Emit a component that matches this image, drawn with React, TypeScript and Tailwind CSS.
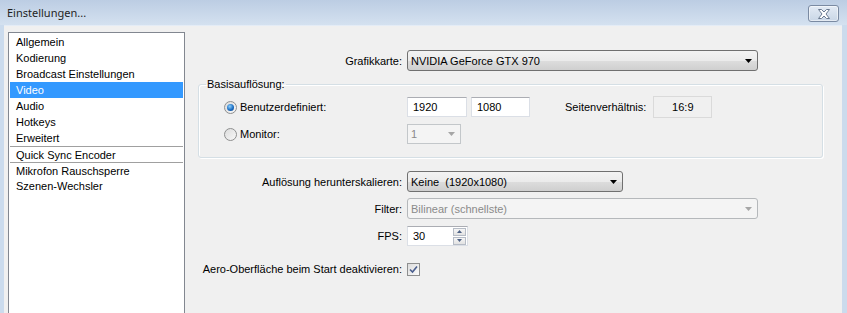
import React from "react";

const NAV_ITEMS = [
  { label: "Allgemein" },
  { label: "Kodierung" },
  { label: "Broadcast Einstellungen" },
  { label: "Video", active: true },
  { label: "Audio" },
  { label: "Hotkeys" },
  { label: "Erweitert" },
  { label: "Quick Sync Encoder", divider: true },
  { label: "Mikrofon Rauschsperre", divider: true },
  { label: "Szenen-Wechsler" },
];

function Arrow({ disabled = false }: { disabled?: boolean }) {
  return (
    <svg width="7" height="4" viewBox="0 0 7 4" className="shrink-0">
      <path d="M0 0h7L3.5 4z" fill={disabled ? "#a6a6a6" : "#000"} />
    </svg>
  );
}

function Combo({
  value,
  width,
  disabled = false,
}: {
  value: string;
  width: string;
  disabled?: boolean;
}) {
  return (
    <div
      className={`${width} h-[21px] flex items-center justify-between pl-[3px] pr-[5px] rounded-[3px] border ${
        disabled
          ? "border-[#b5b8bb] bg-[#f4f4f4] text-[#8a8a8a]"
          : "border-[#707070] bg-[linear-gradient(#f3f3f3_0%,#ebebeb_50%,#dddddd_51%,#cfcfcf_100%)] text-black"
      }`}
    >
      <span className="whitespace-pre">{value}</span>
      <Arrow disabled={disabled} />
    </div>
  );
}

function TextBox({ value, width }: { value: string; width: string }) {
  return (
    <div
      className={`${width} h-[20px] flex items-center px-[5px] bg-white border border-[#dbdfe6] border-t-[#abadb3]`}
    >
      {value}
    </div>
  );
}

function Radio({ checked = false }: { checked?: boolean }) {
  return (
    <div className="w-[13px] h-[13px] rounded-full border border-[#8e8f8f] bg-[linear-gradient(135deg,#dcdcdc,#f8f8f8)] flex items-center justify-center shrink-0">
      {checked && (
        <div className="w-[7px] h-[7px] rounded-full bg-[radial-gradient(circle_at_40%_35%,#8fd0fb,#1c6fc4_55%,#0a3a7e)]" />
      )}
    </div>
  );
}

export default function App() {
  return (
    <div
      className="w-[847px] h-[313px] overflow-hidden flex flex-col bg-[#cbdbed] text-[11px] leading-[14px] text-black"
      style={{ fontFamily: '"Liberation Sans", Arial, sans-serif' }}
    >
      {/* Title bar */}
      <div className="h-[25px] shrink-0 flex items-start justify-between pl-[7px] pr-[8px] bg-[linear-gradient(#bccde3,#d4e1f0)]">
        <span
          className="mt-[5px] text-[11px] leading-[15px] text-[#1f1f1f]"
          style={{ fontFamily: '"Noto Sans", "Open Sans", sans-serif' }}
        >
          Einstellungen...
        </span>
        <div className="mt-[5px] w-[31px] h-[17px] rounded-[3px] border border-[#7a8aa2] bg-[linear-gradient(#e3ebf5,#c9d6e6)] flex items-center justify-center shadow-[inset_0_0_0_1px_rgba(255,255,255,0.5)]">
          <svg width="14" height="10" viewBox="0 0 14 10">
            <path
              d="M1.5 0.5h3l2.5 2.5 2.5-2.5h3L9 5l3.5 4.5h-3L7 7 4.5 9.5h-3L5 5z"
              fill="#fff"
              stroke="#6b7a90"
              strokeWidth="1"
              strokeLinejoin="round"
            />
          </svg>
        </div>
      </div>

      {/* Client area */}
      <div className="flex-1 flex ml-[4px] mr-[5px] bg-[#f0f0f0] border-t border-[#e4ecf6]">
        {/* List */}
        <div className="ml-[4px] mt-[6px] w-[177px] shrink-0 bg-white border border-[#828790] p-[1px] h-[300px]">
          {NAV_ITEMS.map((item) => (
            <div
              key={item.label}
              className={`h-[16px] flex items-center px-[6px] ${
                item.divider ? "border-t border-[#a0a0a0]" : ""
              } ${item.active ? "bg-[#3399ff] text-white" : ""}`}
            >
              {item.label}
            </div>
          ))}
        </div>

        {/* Settings */}
        <div className="flex-1 pl-[13px] pr-[19px] pt-[24px]">
          <div className="flex items-center">
            <div className="w-[204px] text-right">Grafikkarte:</div>
            <div className="ml-[5px]">
              <Combo value="NVIDIA GeForce GTX 970" width="w-[351px]" />
            </div>
          </div>

          <fieldset className="mt-[6px] border border-[#d5dfe5] rounded-[3px] shadow-[inset_1px_1px_0_#fff,1px_1px_0_#fff] pb-[13px]">
            <legend className="ml-[7px] px-[1px]">Basisauflösung:</legend>
            <div className="mt-[5px] flex items-center pl-[25px]">
              <div className="w-[183px] flex items-center gap-[3px]">
                <Radio checked />
                <span>Benutzerdefiniert:</span>
              </div>
              <TextBox value="1920" width="w-[60px]" />
              <div className="ml-[4px]">
                <TextBox value="1080" width="w-[59px]" />
              </div>
              <span className="ml-[35px]">Seitenverhältnis:</span>
              <div className="ml-[7px] w-[59px] h-[22px] flex items-center justify-center border border-[#dadada] bg-[#f0f0f0]">
                16:9
              </div>
            </div>
            <div className="mt-[6px] flex items-center pl-[25px]">
              <div className="w-[183px] flex items-center gap-[3px]">
                <Radio />
                <span>Monitor:</span>
              </div>
              <div className="w-[54px] h-[20px] flex items-center justify-between pl-[3px] pr-[5px] border border-[#c3c7ca] bg-[#f4f4f4] text-[#8a8a8a]">
                <span>1</span>
                <Arrow disabled />
              </div>
            </div>
          </fieldset>

          <div className="mt-[13px] flex items-center">
            <div className="w-[204px] text-right">Auflösung herunterskalieren:</div>
            <div className="ml-[5px]">
              <Combo value="Keine  (1920x1080)" width="w-[216px]" />
            </div>
          </div>

          <div className="mt-[6px] flex items-center">
            <div className="w-[204px] text-right">Filter:</div>
            <div className="ml-[5px]">
              <Combo value="Bilinear (schnellste)" width="w-[351px]" disabled />
            </div>
          </div>

          <div className="mt-[7px] flex items-center">
            <div className="w-[204px] text-right">FPS:</div>
            <div className="ml-[5px] w-[61px] h-[20px] flex items-center justify-between pl-[5px] pr-[1px] bg-white border border-[#dbdfe6] border-t-[#abadb3]">
              <span>30</span>
              <div className="flex flex-col gap-[1px]">
                {[0, 1].map((i) => (
                  <div
                    key={i}
                    className="w-[13px] h-[8px] flex items-center justify-center border border-[#b6bcc6] bg-[linear-gradient(#f6f6f6,#e2e2e2)]"
                  >
                    <svg width="5" height="3" viewBox="0 0 5 3">
                      <path
                        d={i === 0 ? "M0 3h5L2.5 0z" : "M0 0h5L2.5 3z"}
                        fill="#4d6185"
                      />
                    </svg>
                  </div>
                ))}
              </div>
            </div>
          </div>

          <div className="mt-[16px] flex items-center">
            <div className="w-[204px] text-right">Aero-Oberfläche beim Start deaktivieren:</div>
            <div className="ml-[5px] w-[13px] h-[13px] border border-[#8e8f8f] bg-[linear-gradient(135deg,#dcdcdc,#fbfbfb)] flex items-center justify-center">
              <svg width="9" height="9" viewBox="0 0 9 9">
                <path
                  d="M1 4.5l2.5 2.5L8 1.5"
                  fill="none"
                  stroke="#4a5e8e"
                  strokeWidth="1.6"
                />
              </svg>
            </div>
          </div>
        </div>
      </div>
    </div>
  );
}
